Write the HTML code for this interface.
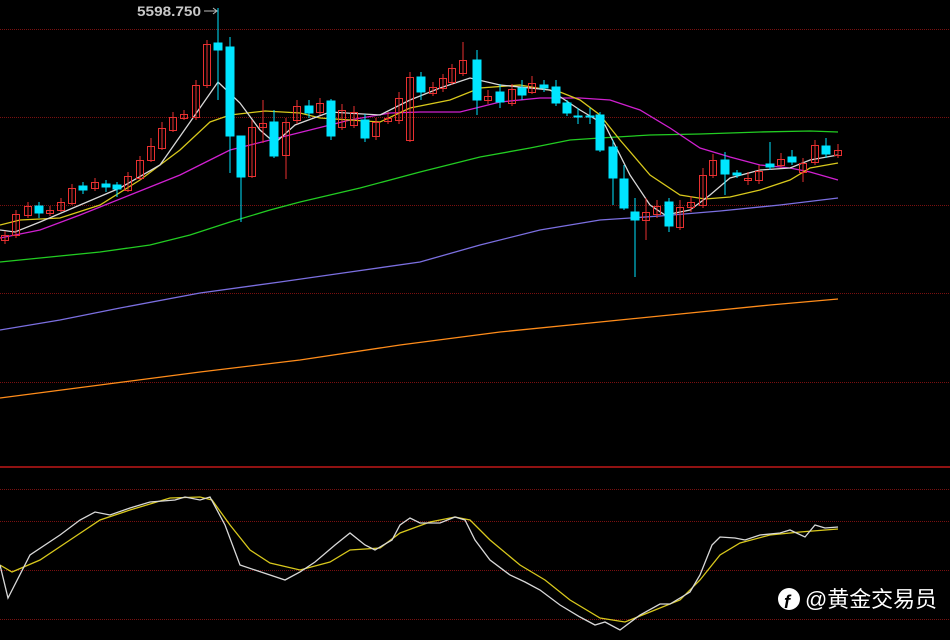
<!DOCTYPE html>
<html><head><meta charset="utf-8"><style>
html,body{margin:0;padding:0;background:#000;width:950px;height:640px;overflow:hidden}
svg{display:block}
</style></head><body>
<svg width="950" height="640" viewBox="0 0 950 640" xmlns="http://www.w3.org/2000/svg">
<rect width="950" height="640" fill="#000"/>
<g stroke="#7a1010" stroke-width="1" stroke-dasharray="1 1">
<line x1="0" y1="29.5" x2="950" y2="29.5"/><line x1="0" y1="117.5" x2="950" y2="117.5"/>
<line x1="0" y1="205.5" x2="950" y2="205.5"/><line x1="0" y1="293.5" x2="950" y2="293.5"/>
<line x1="0" y1="382.5" x2="950" y2="382.5"/>
<line x1="0" y1="489.5" x2="950" y2="489.5"/><line x1="0" y1="521.5" x2="950" y2="521.5"/>
<line x1="0" y1="570.5" x2="950" y2="570.5"/><line x1="0" y1="619.5" x2="950" y2="619.5"/>
</g>
<line x1="0" y1="467" x2="950" y2="467" stroke="#c01818" stroke-width="1.5"/>
<g fill="none" stroke-width="1.3">
<polyline stroke="#ff8c1a" points="0,398 100,385 200,372 300,360 400,345 500,332 600,322 700,312 770,305 838,299"/>
<polyline stroke="#7b6fe0" points="0,330 60,320 120,308 200,293 280,282 350,272 420,262 480,245 540,230 600,220 660,216 720,211 780,205 838,198"/>
<polyline stroke="#22cc22" points="0,262 50,257 100,252 150,245 190,235 230,222 270,210 300,202 360,188 420,172 480,157 530,148 570,140 600,138 650,135 700,134 760,132 810,131 838,132"/>
<polyline stroke="#d020d0" points="0,238 40,230 80,215 130,195 180,175 210,160 230,150 270,140 310,130 350,120 390,113 420,112 460,112 500,102 540,98 580,98 610,100 640,110 670,128 700,148 730,157 760,165 790,168 810,172 838,180"/>
<polyline stroke="#d8c81c" points="0,225 20,220 60,218 100,205 140,180 180,150 210,122 230,115 265,111 300,113 320,118 350,120 380,122 410,108 450,100 480,88 520,85 560,92 580,100 600,115 620,140 650,175 680,195 705,199 730,197 760,190 790,180 810,168 838,163"/>
<polyline stroke="#d8d8d8" points="0,230 15,232 40,222 80,205 120,188 160,165 195,115 218,82 240,103 260,130 275,143 295,125 330,112 380,115 410,100 440,88 470,78 500,85 550,90 580,110 605,125 630,175 650,205 665,215 690,210 710,195 730,178 760,170 790,168 810,160 838,155"/>
</g>
<g stroke="#e83030" stroke-width="1" fill="none">
<path d="M5 231V244M16 210V238M28 202V218M50 206V216M61 198V212M72 184V205M95 178V191M128 172V192M140 156V180M151 138V162M162 122V150M173 112V132M184 110V120M196 80V120M207 40V88M252 120V178M263 100V143M286 118V179M297 100V124M320 98V115M342 104V130M354 106V128M376 118V140M388 112V124M399 92V124M410 72V142M433 82V96M443 74V92M452 64V85M463 42V76M488 90V104M512 84V106M532 76V94M646 198V240M657 200V218M680 200V230M691 196V212M703 168V208M713 154V178M748 172V185M759 165V184M781 153V168M803 158V182M815 140V165M838 144V158"/>
<rect x="1.5" y="235.5" width="7" height="5"/><rect x="12.5" y="214.5" width="7" height="21"/><rect x="24.5" y="206.5" width="7" height="9"/>
<rect x="46.5" y="210.5" width="7" height="3"/><rect x="57.5" y="202.5" width="7" height="8"/><rect x="68.5" y="188.5" width="7" height="15"/>
<rect x="91.5" y="182.5" width="7" height="6"/><rect x="124.5" y="176.5" width="7" height="14"/><rect x="136.5" y="160.5" width="7" height="18"/>
<rect x="147.5" y="146.5" width="7" height="14"/><rect x="158.5" y="128.5" width="7" height="20"/><rect x="169.5" y="117.5" width="7" height="13"/>
<rect x="180.5" y="114.5" width="7" height="4"/><rect x="192.5" y="85.5" width="7" height="32"/><rect x="203.5" y="44.5" width="7" height="41"/>
<rect x="248.5" y="127.5" width="7" height="49"/><rect x="259.5" y="123.5" width="7" height="4"/><rect x="282.5" y="122.5" width="7" height="33"/>
<rect x="293.5" y="106.5" width="7" height="14"/><rect x="316.5" y="103.5" width="7" height="9"/><rect x="338.5" y="110.5" width="7" height="17"/>
<rect x="350.5" y="112.5" width="7" height="13"/><rect x="372.5" y="122.5" width="7" height="14"/><rect x="384.5" y="118.5" width="7" height="3"/>
<rect x="395.5" y="98.5" width="7" height="22"/><rect x="406.5" y="77.5" width="7" height="63"/><rect x="429.5" y="87.5" width="7" height="6"/>
<rect x="439.5" y="78.5" width="7" height="10"/><rect x="448.5" y="68.5" width="7" height="14"/><rect x="459.5" y="60.5" width="7" height="13"/>
<rect x="484.5" y="96.5" width="7" height="4"/><rect x="508.5" y="89.5" width="7" height="14"/><rect x="528.5" y="83.5" width="7" height="9"/>
<rect x="642.5" y="212.5" width="7" height="8"/><rect x="653.5" y="206.5" width="7" height="8"/><rect x="676.5" y="207.5" width="7" height="20"/>
<rect x="687.5" y="202.5" width="7" height="5"/><rect x="699.5" y="175.5" width="7" height="30"/><rect x="709.5" y="160.5" width="7" height="15"/>
<rect x="744.5" y="178.5" width="7" height="2"/><rect x="755.5" y="171.5" width="7" height="9"/><rect x="777.5" y="159.5" width="7" height="6"/>
<rect x="799.5" y="163.5" width="7" height="9"/><rect x="811.5" y="145.5" width="7" height="17"/><rect x="834.5" y="150.5" width="7" height="5"/>
</g>
<g stroke="#00e5ff" stroke-width="1" fill="#00e5ff">
<path d="M39 202V218M83 182V194M106 180V192M117 182V197M218 8V100M230 37V173M241 136V222M274 110V158M309 100V118M331 99V140M365 114V142M421 72V100M477 50V115M500 84V108M522 80V100M544 80V92M556 80V106M567 100V116M578 108V124M590 108V124M600 112V152M613 140V205M624 165V210M635 198V277M669 198V232M725 152V195M737 170V178M770 142V170M792 150V165M826 138V158"/>
<rect x="35" y="206" width="8" height="7"/><rect x="79" y="186" width="8" height="4"/><rect x="102" y="184" width="8" height="3"/>
<rect x="113" y="185" width="8" height="4"/><rect x="214" y="43" width="8" height="7"/><rect x="226" y="47" width="8" height="89"/>
<rect x="237" y="136" width="8" height="41"/><rect x="270" y="122" width="8" height="34"/><rect x="305" y="106" width="8" height="7"/>
<rect x="327" y="101" width="8" height="35"/><rect x="361" y="120" width="8" height="18"/><rect x="417" y="77" width="8" height="15"/>
<rect x="473" y="60" width="8" height="40"/><rect x="496" y="92" width="8" height="10"/><rect x="518" y="88" width="8" height="7"/>
<rect x="540" y="85" width="8" height="3"/><rect x="552" y="87" width="8" height="16"/><rect x="563" y="103" width="8" height="10"/>
<rect x="574" y="116" width="8" height="1"/><rect x="586" y="116" width="8" height="1"/><rect x="596" y="115" width="8" height="35"/>
<rect x="609" y="147" width="8" height="31"/><rect x="620" y="179" width="8" height="29"/><rect x="631" y="212" width="8" height="8"/>
<rect x="665" y="202" width="8" height="24"/><rect x="721" y="160" width="8" height="14"/><rect x="733" y="173" width="8" height="2"/>
<rect x="766" y="164" width="8" height="3"/><rect x="788" y="157" width="8" height="5"/><rect x="822" y="146" width="8" height="8"/>
</g>
<line x1="204" y1="11" x2="216" y2="11" stroke="#bbb" stroke-width="1"/>
<path d="M213 8L217 11L213 14" stroke="#bbb" fill="none"/>
<text x="137" y="16" font-family="Liberation Sans, sans-serif" font-size="14" font-weight="bold" fill="#c8c8c8" textLength="64" lengthAdjust="spacingAndGlyphs">5598.750</text>
<g fill="none" stroke-width="1.3">
<polyline stroke="#d8c81c" points="0,565 12,572 40,560 70,540 100,520 130,510 170,498 200,497 212,500 230,525 250,550 270,563 300,570 330,562 350,550 380,548 400,533 430,522 455,517 470,520 490,540 520,565 545,580 570,600 600,618 625,622 650,612 680,600 700,580 720,555 740,543 770,535 800,532 838,529"/>
<polyline stroke="#d8d8d8" points="0,565 8,598 30,555 60,535 80,520 95,512 110,515 130,508 150,502 175,500 185,497 200,500 210,497 225,525 240,565 255,570 270,575 285,580 300,572 315,562 335,545 350,533 365,545 375,550 380,547 392,540 400,525 410,518 420,523 440,523 455,517 465,520 475,540 490,560 510,575 525,582 540,590 560,605 580,617 595,625 605,622 620,630 640,615 660,604 670,604 690,592 700,575 712,545 720,537 735,538 745,540 760,535 780,533 790,530 805,537 815,525 825,528 838,527"/>
</g>
<circle cx="789" cy="599" r="11" fill="#fff"/>
<text x="784" y="608" font-family="Liberation Sans, sans-serif" font-size="18" font-weight="bold" font-style="italic" fill="#000">f</text>
<text x="805" y="607" font-family="Liberation Sans, 'Noto Sans CJK SC', sans-serif" font-size="22" fill="#fff" textLength="132" lengthAdjust="spacingAndGlyphs">@黄金交易员</text>
</svg>
</body></html>
